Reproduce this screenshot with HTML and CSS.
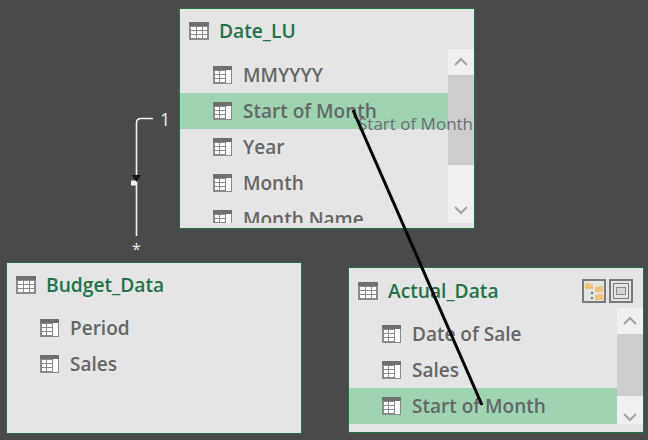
FILE: index.html
```html
<!DOCTYPE html>
<html lang="en">
<head>
<meta charset="utf-8">
<title>Data model diagram</title>
<link rel="stylesheet" href="styles.css">
</head>
<body>
<svg class="defs" width="0" height="0" aria-hidden="true">
  <symbol id="tbl" viewBox="0 0 20 18">
    <rect width="20" height="18" fill="#8a8a8a"/>
    <rect x="0" y="0" width="20" height="4" fill="#6f6f6f"/>
    <g fill="#fff">
      <rect x="2" y="5" width="5" height="3"/><rect x="8" y="5" width="5" height="3"/><rect x="14" y="5" width="4" height="3"/>
      <rect x="2" y="9" width="5" height="3"/><rect x="8" y="9" width="5" height="3"/><rect x="14" y="9" width="4" height="3"/>
      <rect x="2" y="13" width="5" height="3"/><rect x="8" y="13" width="5" height="3"/><rect x="14" y="13" width="4" height="3"/>
    </g>
  </symbol>
  <symbol id="fld" viewBox="0 0 19 18">
    <rect width="19" height="18" fill="#8a8a8a"/>
    <rect x="0" y="0" width="19" height="4" fill="#6f6f6f"/>
    <rect x="13" y="4" width="5" height="13" fill="#fff"/>
    <g fill="#fff">
      <rect x="2" y="5" width="4" height="3"/><rect x="7" y="5" width="5" height="3"/>
      <rect x="2" y="9" width="4" height="3"/><rect x="7" y="9" width="5" height="3"/>
      <rect x="2" y="13" width="4" height="3"/><rect x="7" y="13" width="5" height="3"/>
    </g>
  </symbol>
  <symbol id="up" viewBox="0 0 26 26"><path d="M7 16l6-6 6 6" fill="none" stroke="#a3a3a3" stroke-width="2"/></symbol>
  <symbol id="down" viewBox="0 0 26 26"><path d="M7 10l6 6 6-6" fill="none" stroke="#a3a3a3" stroke-width="2"/></symbol>
</svg>

<section class="table table-date">
  <header class="head"><svg class="head-icon"><use href="#tbl"/></svg><h2 class="title">Date_LU</h2></header>
  <div class="body body-date">
    <ul class="fields">
      <li class="field"><svg class="field-icon"><use href="#fld"/></svg>MMYYYY</li>
      <li class="field on"><svg class="field-icon"><use href="#fld"/></svg>Start of Month</li>
      <li class="field"><svg class="field-icon"><use href="#fld"/></svg>Year</li>
      <li class="field"><svg class="field-icon"><use href="#fld"/></svg>Month</li>
      <li class="field"><svg class="field-icon"><use href="#fld"/></svg>Month Name</li>
    </ul>
    <div class="scroll">
      <div class="btn"><svg class="arrow"><use href="#up"/></svg></div>
      <div class="thumb thumb-date"></div>
      <div class="track"></div>
      <div class="btn"><svg class="arrow"><use href="#down"/></svg></div>
    </div>
  </div>
</section>

<section class="table table-budget">
  <header class="head"><svg class="head-icon"><use href="#tbl"/></svg><h2 class="title">Budget_Data</h2></header>
  <ul class="fields fields-budget">
    <li class="field"><svg class="field-icon"><use href="#fld"/></svg>Period</li>
    <li class="field"><svg class="field-icon"><use href="#fld"/></svg>Sales</li>
  </ul>
</section>

<section class="table table-actual">
  <header class="head head-actual">
    <svg class="head-icon"><use href="#tbl"/></svg><h2 class="title">Actual_Data</h2>
    <div class="tools">
      <svg class="tool" viewBox="0 0 24 24"><rect x="1" y="1" width="22" height="22" fill="#e5e5e5" stroke="#7a7a7a" stroke-width="2"/><path d="M3 4h4l1 1h3v5H3zM13 8h3l1-1h4v6h-8zM13 16h3l1-1h4v6h-8z" fill="#f0c376"/><path d="M9 13h2v2H9zM9 18h2v2H9z" fill="#777"/></svg>
      <svg class="tool" viewBox="0 0 24 24"><rect x="1" y="1" width="22" height="22" fill="#e5e5e5" stroke="#7a7a7a" stroke-width="2"/><rect x="4.500" y="4.500" width="15" height="15" fill="none" stroke="#7a7a7a"/><rect x="7.500" y="8.500" width="9" height="7" fill="#d6d6d6" stroke="#8a8a8a"/></svg>
    </div>
  </header>
  <div class="body body-actual">
    <ul class="fields">
      <li class="field"><svg class="field-icon"><use href="#fld"/></svg>Date of Sale</li>
      <li class="field"><svg class="field-icon"><use href="#fld"/></svg>Sales</li>
      <li class="field on"><svg class="field-icon"><use href="#fld"/></svg>Start of Month</li>
    </ul>
    <div class="scroll">
      <div class="btn"><svg class="arrow"><use href="#up"/></svg></div>
      <div class="thumb thumb-actual"></div>
      <div class="track"></div>
      <div class="btn btn-low"><svg class="arrow"><use href="#down"/></svg></div>
    </div>
  </div>
</section>

<span class="tip">Start of Month</span>
<span class="card card-one">1</span>
<span class="card card-many">*</span>

<svg class="wires" viewBox="0 0 648 440" aria-hidden="true">
  <path d="M153 118.500h-12q-4.500 0-4.500 4.500v113" fill="none" stroke="#f2f2f2" stroke-width="1.600"/>
  <path d="M131 180.500h5.500v5h-5.500z" fill="#f2f2f2"/>
  <path d="M132 175h9l-4.500 7z" fill="#111"/>
  <path d="M353 110L482 405" stroke="#000" stroke-width="3" fill="none"/>
</svg>
</body>
</html>
```
FILE: styles.css
```css
* { box-sizing: border-box; }
html, body { margin: 0; height: 100%; }
body {
  position: relative;
  width: 648px;
  height: 440px;
  overflow: hidden;
  background: #4a4a4a;
  font-family: "Open Sans", "Noto Sans", sans-serif;
}
.defs { position: absolute; }
.table {
  position: absolute;
  width: 296px;
  background: #e5e5e5;
  border: 1px solid #217346;
  display: flex;
  flex-direction: column;
}
.table-date { left: 179px; top: 8px; height: 221px; }
.table-budget { left: 6px; top: 262px; height: 172px; }
.table-actual { left: 348px; top: 267px; height: 166px; }
.head {
  display: flex;
  align-items: center;
  height: 37px;
  flex: none;
  padding-left: 9px;
  margin-top: 3px;
}
.head-icon { width: 20px; height: 18px; flex: none; margin-right: 10px; }
.title {
  margin: 0;
  font-size: 19.200px;
  font-weight: 600;
  color: #217346;
}
.head-actual { height: 35px; margin-top: 5px; }
.tools {
  margin-left: auto;
  margin-right: 10px;
  display: flex;
  gap: 3px;
}
.tool { width: 24px; height: 24px; display: block; }
.body { display: flex; }
.body-date { height: 174px; }
.body-actual { height: 116px; }
.fields {
  list-style: none;
  margin: 0;
  padding: 8px 0 0;
  flex: 1;
  overflow: hidden;
}
.fields-budget { padding-top: 7px; }
.field {
  display: flex;
  align-items: center;
  height: 36px;
  padding-left: 33px;
  font-size: 19px;
  font-weight: 600;
  color: #666;
  white-space: nowrap;
}
.field.on { background: #9fd4b3; }
.field-icon { width: 19px; height: 18px; flex: none; margin-right: 11px; }
.scroll {
  width: 26px;
  flex: none;
  display: flex;
  flex-direction: column;
  background: #f0f0f0;
}
.btn { height: 26px; flex: none; background: #f0f0f0; }
.btn-low { height: 20px; }
.arrow { width: 26px; height: 26px; display: block; }
.thumb { background: #cdcdcd; flex: none; }
.thumb-date { height: 90px; }
.thumb-actual { height: 62px; }
.track { flex: 1; }
.tip {
  position: absolute;
  left: 358px;
  top: 113px;
  width: 116px;
  overflow: hidden;
  font-size: 17px;
  line-height: 22px;
  color: #6a6f70;
  white-space: nowrap;
}
.card {
  position: absolute;
  color: #f2f2f2;
  font-size: 16px;
  line-height: 20px;
}
.card-one { left: 160px; top: 109px; font-size: 18px; }
.card-many { left: 132px; top: 239px; }
.wires {
  position: absolute;
  left: 0;
  top: 0;
  width: 648px;
  height: 440px;
  pointer-events: none;
}
```
